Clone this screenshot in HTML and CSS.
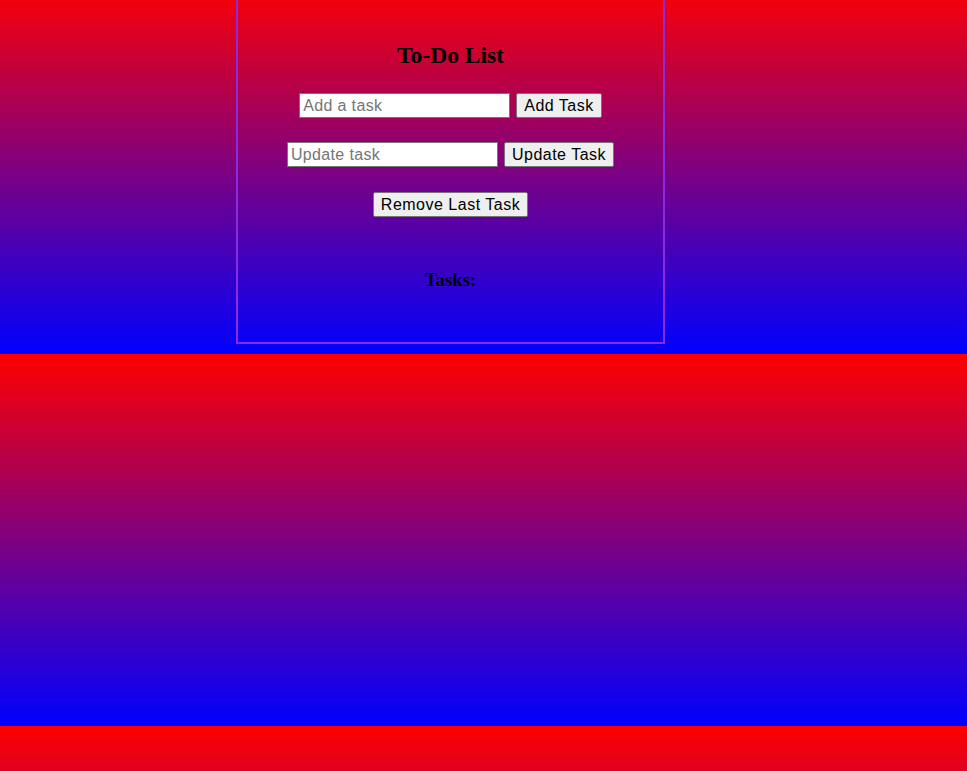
FILE: index.html
```html
<!DOCTYPE html>
<html lang="en">
<head>
<meta charset="utf-8">
<title>To-Do List</title>
<link rel="stylesheet" href="styles.css">
</head>
<body>
<div class="container">
  <h2 class="title">To-Do List</h2>
  <div class="row row-first">
    <input class="field" type="text" placeholder="Add a task">
    <button class="btn">Add Task</button>
  </div>
  <div class="row row-second">
    <input class="field" type="text" placeholder="Update task">
    <button class="btn">Update Task</button>
  </div>
  <div class="row row-third">
    <button class="btn">Remove Last Task</button>
  </div>
  <h3 class="tasks-title">Tasks:</h3>
  <ul class="task-list"></ul>
</div>
</body>
</html>
```

FILE: styles.css
```css
html {
  min-height: 100%;
  background-color: #ff0000;
  background-image: linear-gradient(to bottom, #ff0000, #0000ff);
  background-size: 100% 372px;
  background-position: 0 -18px;
  background-repeat: repeat;
}

body {
  margin: 0;
  font-family: "Liberation Serif", "Times New Roman", serif;
  color: #000;
}

.container {
  box-sizing: border-box;
  width: 429px;
  margin-left: 236px;
  border: 2px solid #8a2be2;
  border-top: none;
  padding: 41px 0 52px;
  text-align: center;
}

.title {
  margin: 0;
  font-size: 23.5px;
  line-height: 28px;
  font-weight: bold;
}

.row {
  display: flex;
  justify-content: center;
  align-items: center;
  gap: 6px;
}

.row-first {
  margin-top: 24px;
}

.row-second {
  margin-top: 24px;
}

.row-third {
  margin-top: 25px;
}

.field {
  box-sizing: border-box;
  width: 211px;
  height: 25px;
  margin: 0;
  padding: 1px 3px;
  border: 1px solid #767676;
  border-radius: 0;
  background: #fff;
  font-family: "Liberation Sans", Arial, sans-serif;
  font-size: 16px;
  letter-spacing: 0.35px;
  color: #000;
}

.field::placeholder {
  color: #757575;
}

.btn {
  box-sizing: border-box;
  height: 25px;
  margin: 0;
  padding: 1px 7px;
  border: 1px solid #767676;
  border-radius: 2px;
  background: #efefef;
  font-family: "Liberation Sans", Arial, sans-serif;
  font-size: 16px;
  letter-spacing: 0.5px;
  color: #000;
}

.tasks-title {
  margin: 52px 0 0;
  font-size: 18.72px;
  line-height: 21px;
  font-weight: bold;
}

.task-list {
  margin: 0;
  padding: 0;
  list-style: none;
}
```
